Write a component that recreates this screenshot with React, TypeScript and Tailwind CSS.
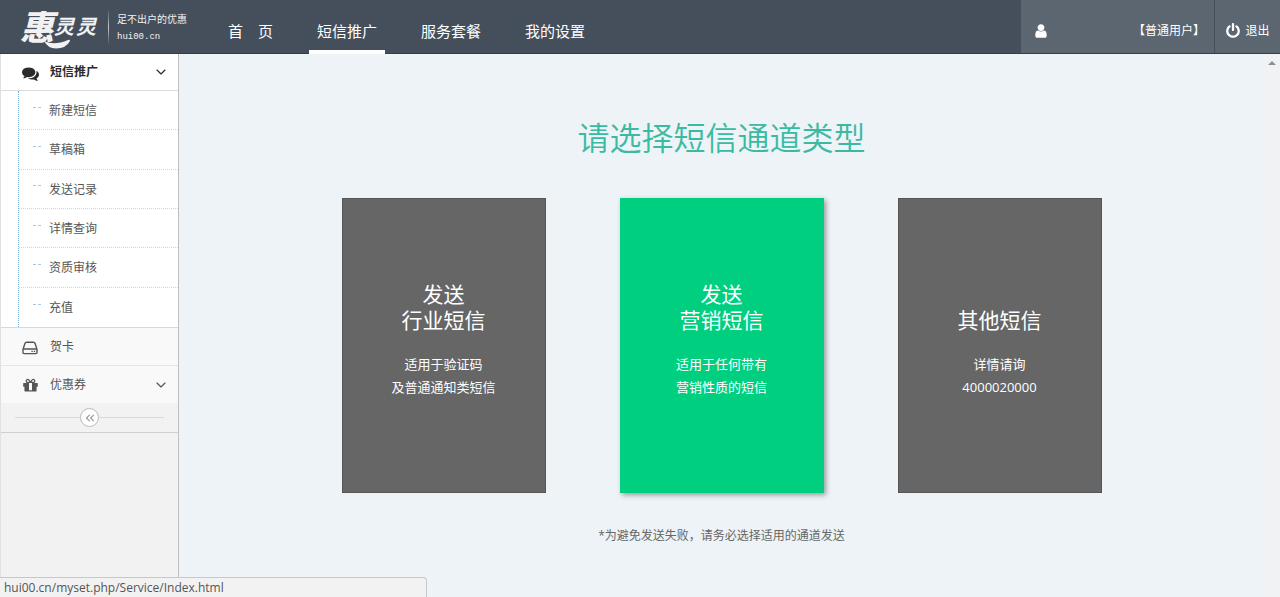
import { useState } from "react";
import type { ReactNode } from "react";
import { ChevronDown, ChevronsLeft } from "lucide-react";

const NAV_ITEMS = ["首　页", "短信推广", "服务套餐", "我的设置"];

const SUB_ITEMS = ["新建短信", "草稿箱", "发送记录", "详情查询", "资质审核", "充值"];

interface Channel {
  id: string;
  title: string[];
  desc: string[];
}

const CHANNELS: Channel[] = [
  { id: "industry", title: ["发送", "行业短信"], desc: ["适用于验证码", "及普通通知类短信"] },
  { id: "marketing", title: ["发送", "营销短信"], desc: ["适用于任何带有", "营销性质的短信"] },
  { id: "other", title: ["其他短信"], desc: ["详情请询", "4000020000"] },
];

const ICONS = {
  comments:
    "M1408 768q0 139-94 257t-256.5 186.5-353.5 68.5q-86 0-176-16-124 88-278 128-36 9-86 16h-3q-11 0-20.5-8t-11.5-21q-1-3-1-6.5t.5-6.5 2-6l2.5-5 3.5-5.5 4-5 4.5-5 4-4.5q5-6 23-25t26-29.5 22.5-29 25-38.5 20.5-44q-124-72-195-177t-71-224q0-139 94-257t256.5-186.5 353.5-68.5 353.5 68.5 256.5 186.5 94 257zm384 256q0 120-71 224.5t-195 176.5q10 24 20.5 44t25 38.5 22.5 29 26 29.5 23 25q1 1 4 4.5t4.5 5 4 5 3.5 5.5l2.5 5 2 6 .5 6.5-1 6.5q-3 14-13 22t-22 7q-50-7-86-16-154-40-278-128-90 16-176 16-271 0-472-132 58 4 88 4 161 0 309-45t264-129q125-92 192-212t67-254q0-77-23-152 129 71 204 178t75 230z",
  power:
    "M1664 896q0 156-61 298t-164 245-245 164-298 61-298-61-245-164-164-245-61-298q0-182 80.5-343t226.5-270q43-32 95.5-25t83.5 50q32 42 24.5 94.5t-49.5 84.5q-98 74-151.5 181t-53.5 228q0 104 40.5 198.5t109.5 163.5 163.5 109.5 198.5 40.5 198.5-40.5 163.5-109.5 109.5-163.5 40.5-198.5q0-121-53.5-228t-151.5-181q-42-32-49.5-84.5t24.5-94.5q31-43 84-50t95 25q146 109 226.5 270t80.5 343zm-640-768v640q0 52-38 90t-90 38-90-38-38-90v-640q0-52 38-90t90-38 90 38 38 90z",
  user:
    "M1536 1399q0 109-62.5 187t-150.5 78h-854q-88 0-150.5-78t-62.5-187q0-85 8.5-160.5t31.5-152 58.5-131 94-89 134.5-34.5q131 128 313 128t313-128q76 0 134.5 34.5t94 89 58.5 131 31.5 152 8.5 160.5zm-256-887q0 159-112.5 271.5t-271.5 112.5-271.5-112.5-112.5-271.5 112.5-271.5 271.5-112.5 271.5 112.5 112.5 271.5z",
  gift:
    "M1056 1356v-716h-320v716q0 25 18 38.5t46 13.5h192q28 0 46-13.5t18-38.5zm-456-844h195l-126-161q-26-31-69-31-40 0-68 28t-28 68 28 68 68 28zm688-96q0-40-28-68t-68-28q-43 0-69 31l-125 161h194q40 0 68-28t28-68zm376 256v320q0 14-9 23t-23 9h-96v416q0 40-28 68t-68 28h-1088q-40 0-68-28t-28-68v-416h-96q-14 0-23-9t-9-23v-320q0-14 9-23t23-9h440q-93 0-158.5-65.5t-65.5-158.5 65.5-158.5 158.5-65.5q107 0 168 77l128 165 128-165q61-77 168-77 93 0 158.5 65.5t65.5 158.5-65.5 158.5-158.5 65.5h440q14 0 23 9t9 23z",
};

function Icon({ name, className }: { name: keyof typeof ICONS; className: string }) {
  return (
    <svg viewBox="0 0 1792 1792" fill="currentColor" className={className} aria-hidden="true">
      <path d={ICONS[name]} />
    </svg>
  );
}

function DriveIcon() {
  return (
    <svg viewBox="0 0 16 16" fill="none" stroke="currentColor" strokeWidth="1.4" className="h-4 w-4" aria-hidden="true">
      <path d="M1 9.400 3 3.300Q3.400 2.200 4.500 2.200h7q1.100 0 1.500 1.100L15 9.400v3.200q0 1-1 1H2q-1 0-1-1zM1 9h14" />
      <path d="M9.400 11.400h1.400M11.800 11.400h1.400" />
    </svg>
  );
}

function Logo() {
  return (
    <a href="#" className="flex w-[203px] shrink-0 items-center pl-5 text-[#f2f2f2]">
      <span className="relative flex items-center italic">
        <span className="text-[34px] leading-9 font-black">惠</span>
        <span className="flex gap-0.5 text-xl leading-9 font-bold">
          <span>灵</span>
          <span>灵</span>
        </span>
        <svg viewBox="0 0 26 10" className="absolute -bottom-1 left-6 h-[10px] w-[26px]" fill="currentColor" aria-hidden="true">
          <path d="M0 2Q10 7 24 1 26 0 26 2 22 9.500 12 9.500 4 9.500 0 2z" />
        </svg>
      </span>
      <span className="ml-3 h-9 w-px bg-linear-to-b from-transparent via-[#c5cad0] to-transparent" />
      <span className="ml-2 flex flex-col whitespace-nowrap pt-0.5 text-[10px] leading-[18px]">
        <span>足不出户的优惠</span>
        <span className="font-['Liberation_Mono',monospace] text-[9px]">hui00.cn</span>
      </span>
    </a>
  );
}

function Header() {
  const [active, setActive] = useState(1);

  return (
    <header className="flex h-[54px] shrink-0 border-b border-[#333e4b] bg-[#454f5b] text-white">
      <Logo />
      <nav className="ml-[17px] flex gap-7">
        {NAV_ITEMS.map((item, i) => (
          <a
            key={item}
            href="#"
            onClick={() => setActive(i)}
            className={`-mb-px flex items-center border-b-4 px-2 pt-3 text-[15px] leading-5 whitespace-nowrap ${active === i ? "border-white" : "border-transparent"}`}
          >
            {item}
          </a>
        ))}
      </nav>
      <div className="ml-auto flex bg-[#5b6670] text-xs">
        <div className="flex w-[194px] items-center justify-between border-r border-[#45505c] pt-2 pr-[9px] pl-3">
          <Icon name="user" className="h-4 w-4" />
          <span>【普通用户】</span>
        </div>
        <button className="flex w-[65px] items-center justify-center gap-1 pt-2 whitespace-nowrap">
          <Icon name="power" className="h-4 w-4" />
          退出
        </button>
      </div>
    </header>
  );
}

function MenuButton({ icon, label, arrow, className }: { icon: ReactNode; label: string; arrow?: boolean; className: string }) {
  return (
    <button className={`flex w-full items-center pr-[9px] pl-[21px] text-left ${className}`}>
      <span className="flex w-7 shrink-0 pt-0.5">{icon}</span>
      {label}
      {arrow && <ChevronDown className="ml-auto h-4 w-4" strokeWidth={1.75} />}
    </button>
  );
}

function Sidebar() {
  return (
    <aside className="w-[179px] shrink-0 border-r border-l border-r-[#bfbfbf] border-l-[#dce3e0] bg-[#f2f2f2] text-xs text-[#555]">
      <MenuButton
        icon={<Icon name="comments" className="h-[17px] w-[17px]" />}
        label="短信推广"
        arrow
        className="h-[37px] border-b border-[#dcdcdc] bg-white font-bold text-[#2b2b2b]"
      />
      <div className="border-b border-[#d8d8d8] bg-white pl-[17px]">
        <ul className="grid h-[236px] auto-rows-fr border-l border-dotted border-[#7fb0d8]">
          {SUB_ITEMS.map((item) => (
            <li key={item} className="border-b border-dotted border-[#d5d5d5] last:border-b-0">
              <a href="#" className="flex h-full items-center pt-0.5 pl-[14px]">
                <span className="mb-2 w-2 border-t border-dashed border-[#a5c8e4]" />
                <span className="ml-2">{item}</span>
              </a>
            </li>
          ))}
        </ul>
      </div>
      <MenuButton icon={<DriveIcon />} label="贺卡" className="h-[38px] border-b border-[#e5e5e5] bg-[#f9f9f9]" />
      <MenuButton icon={<Icon name="gift" className="h-[17px] w-[17px]" />} label="优惠券" arrow className="h-[37px] bg-[#f9f9f9]" />
      <div className="flex h-[30px] items-center border-b border-[#d0d0d0] px-[14px]">
        <span className="h-px flex-1 bg-[#d9d9d9]" />
        <button aria-label="收起菜单" className="flex h-[19px] w-[19px] items-center justify-center rounded-full border border-[#bbb] bg-white text-[#999]">
          <ChevronsLeft className="h-[14px] w-[14px]" />
        </button>
        <span className="h-px flex-1 bg-[#d9d9d9]" />
      </div>
    </aside>
  );
}

function ChannelCard({ channel, selected, onSelect }: { channel: Channel; selected: boolean; onSelect: () => void }) {
  return (
    <button
      onClick={onSelect}
      className={`flex h-[295px] w-[204px] flex-col items-center border text-white ${selected ? "border-[#00cf80] bg-[#00cf80] shadow-[2px_2px_5px_#999]" : "border-[#555] bg-[#666]"}`}
    >
      <span className="flex h-[134px] flex-col justify-end text-[21px] leading-[26px]">
        {channel.title.map((line) => (
          <span key={line}>{line}</span>
        ))}
      </span>
      <span className="mt-5 flex flex-col text-[13px] leading-[23px]">
        {channel.desc.map((line) => (
          <span key={line}>{line}</span>
        ))}
      </span>
    </button>
  );
}

export default function App() {
  const [selected, setSelected] = useState("marketing");

  return (
    <div className="relative flex min-h-screen flex-col bg-[#edf3f7] font-['Open_Sans','Noto_Sans_CJK_SC',sans-serif]">
      <Header />
      <div className="flex flex-1">
        <Sidebar />
        <main className="flex flex-1 flex-col items-center pt-[60px]">
          <h1 className="text-[32px] leading-12 font-[350] text-[#3bbaa2]">请选择短信通道类型</h1>
          <div className="mt-9 flex gap-[74px]">
            {CHANNELS.map((channel) => (
              <ChannelCard
                key={channel.id}
                channel={channel}
                selected={selected === channel.id}
                onSelect={() => setSelected(channel.id)}
              />
            ))}
          </div>
          <p className="mt-[33px] text-xs leading-5 text-[#666]">*为避免发送失败，请务必选择适用的通道发送</p>
        </main>
        <div className="flex w-4 shrink-0 justify-center bg-[#f1f2f3] pt-[7px]">
          <svg viewBox="0 0 8 4" className="h-1 w-2" fill="#8f8f8f" aria-hidden="true">
            <path d="M0 4 4 0l4 4z" />
          </svg>
        </div>
      </div>
      <div className="absolute bottom-0 left-0 h-5 w-[427px] rounded-tr border border-b-0 border-l-0 border-[#c8c8c8] bg-[#f2f2f2] pl-1 text-xs leading-5 text-[#555]">
        hui00.cn/myset.php/Service/Index.html
      </div>
    </div>
  );
}
